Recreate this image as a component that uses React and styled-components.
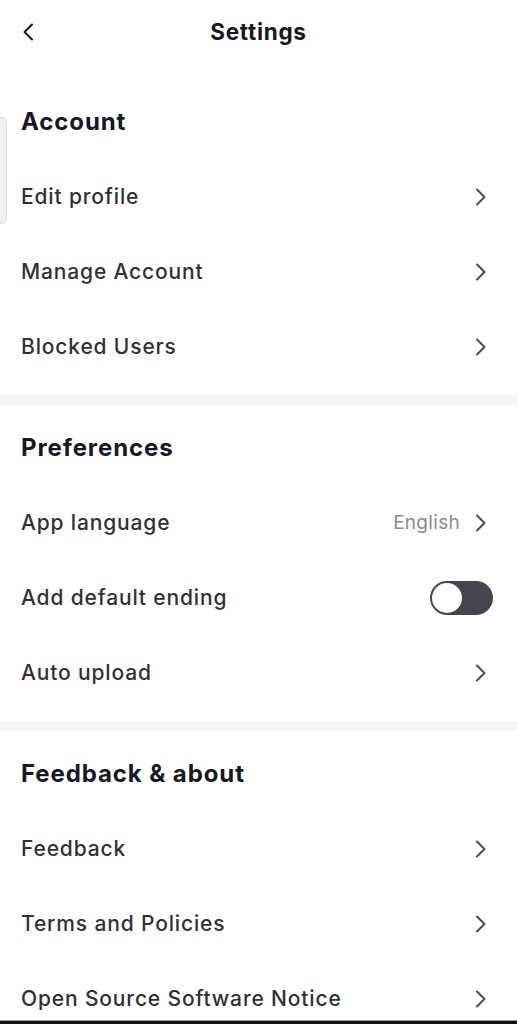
import React, { useState } from "react";
import styled, { createGlobalStyle } from "styled-components";

const GlobalStyle = createGlobalStyle`
  html, body {
    margin: 0;
    padding: 0;
    background: #ffffff;
  }
  body {
    font-family: Inter, "Liberation Sans", sans-serif;
    -webkit-font-smoothing: antialiased;
  }
`;

const Screen = styled.div`
  position: relative;
  width: 517px;
  height: 1024px;
  overflow: hidden;
  background: #ffffff;
  display: flex;
  flex-direction: column;
`;

const TopBar = styled.header`
  height: 62px;
  display: flex;
  align-items: center;
  justify-content: center;
  position: relative;
  margin-bottom: 17px;
  flex-shrink: 0;
`;

const BackButton = styled.button`
  position: absolute;
  left: 15px;
  top: 18px;
  width: 26px;
  height: 28px;
  padding: 0;
  border: none;
  background: none;
  display: flex;
  align-items: center;
  justify-content: center;
`;

const PageTitle = styled.h1`
  margin: 0;
  font-size: 22.5px;
  font-weight: 700;
  color: #161823;
  letter-spacing: 0.7px;
`;

const Section = styled.section`
  display: flex;
  flex-direction: column;
  padding-bottom: 11px;
  flex-shrink: 0;
`;

const SectionTitle = styled.h2`
  margin: 0;
  padding: 30px 21px 24px;
  line-height: 26px;
  font-size: 24px;
  font-weight: 700;
  color: #161823;
  letter-spacing: 0.9px;
`;

const Divider = styled.div`
  height: 10px;
  background: #f6f6f7;
  flex-shrink: 0;
`;

const Row = styled.div`
  height: 75px;
  display: flex;
  align-items: center;
  justify-content: space-between;
  padding-left: 21px;
  padding-right: ${(p) => (p.$toggle ? "24px" : "30px")};
`;

const RowLabel = styled.span`
  font-size: 21px;
  font-weight: 500;
  color: #303136;
  letter-spacing: 0.85px;
`;

const RowEnd = styled.div`
  display: flex;
  align-items: center;
  gap: 15px;
`;

const RowValue = styled.span`
  font-size: 19px;
  color: #8a8b91;
  letter-spacing: 0.3px;
`;

const Track = styled.button`
  width: 63px;
  height: 34px;
  border-radius: 17px;
  border: none;
  padding: 2px;
  background: ${(p) => (p.$on ? "#fe2c55" : "#46454f")};
  display: flex;
  justify-content: ${(p) => (p.$on ? "flex-end" : "flex-start")};
  cursor: pointer;
`;

const Knob = styled.span`
  width: 30px;
  height: 30px;
  border-radius: 50%;
  background: #ffffff;
`;

const EdgeTab = styled.div`
  position: absolute;
  left: -6px;
  top: 117px;
  width: 11px;
  height: 105px;
  border-radius: 5px;
  background: #f1f1f2;
  border: 1px solid #e2e2e4;
`;

const BottomBar = styled.div`
  position: absolute;
  left: 0;
  right: 0;
  bottom: 0;
  height: 3px;
  background: #111111;
  border-top: 1px solid #9a9a9a;
`;

const Chevron = ({ left, color = "#4a4b50" }) => (
  <svg width="12" height="18" viewBox="0 0 12 18" fill="none">
    <path
      d={left ? "M10 1.5L2.5 9L10 16.5" : "M2 1.5L9.5 9L2 16.5"}
      stroke={color}
      strokeWidth="2"
      strokeLinecap="round"
      strokeLinejoin="round"
    />
  </svg>
);

const sections = [
  {
    title: "Account",
    rows: [{ label: "Edit profile" }, { label: "Manage Account" }, { label: "Blocked Users" }],
  },
  {
    title: "Preferences",
    rows: [
      { label: "App language", value: "English" },
      { label: "Add default ending", toggle: true },
      { label: "Auto upload" },
    ],
  },
  {
    title: "Feedback & about",
    rows: [
      { label: "Feedback" },
      { label: "Terms and Policies" },
      { label: "Open Source Software Notice" },
    ],
  },
];

function SettingRow({ row }) {
  const [on, setOn] = useState(false);
  return (
    <Row $toggle={row.toggle}>
      <RowLabel>{row.label}</RowLabel>
      <RowEnd>
        {row.value && <RowValue>{row.value}</RowValue>}
        {row.toggle ? (
          <Track $on={on} onClick={() => setOn(!on)}>
            <Knob />
          </Track>
        ) : (
          <Chevron />
        )}
      </RowEnd>
    </Row>
  );
}

export default function App() {
  return (
    <>
      <GlobalStyle />
      <Screen>
        <TopBar>
          <BackButton>
            <Chevron left color="#161823" />
          </BackButton>
          <PageTitle>Settings</PageTitle>
        </TopBar>
        {sections.map((s, i) => (
          <React.Fragment key={s.title}>
            {i > 0 && <Divider />}
            <Section>
              <SectionTitle>{s.title}</SectionTitle>
              {s.rows.map((r) => (
                <SettingRow key={r.label} row={r} />
              ))}
            </Section>
          </React.Fragment>
        ))}
        <EdgeTab />
        <BottomBar />
      </Screen>
    </>
  );
}
